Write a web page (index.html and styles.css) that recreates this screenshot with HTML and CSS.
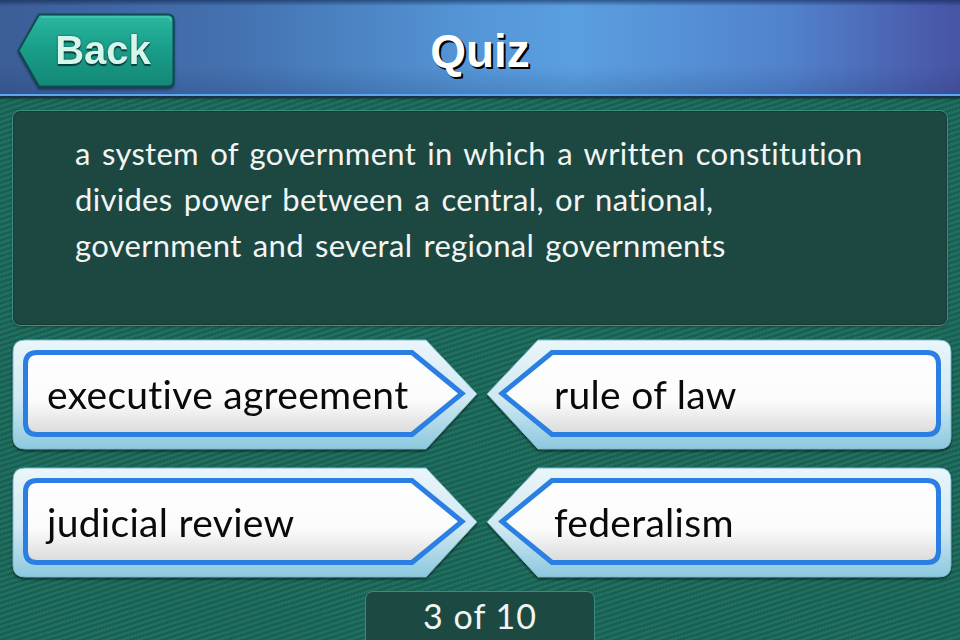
FILE: index.html
```html
<!DOCTYPE html>
<html>

<head>
    <title>Quiz</title>
    <meta name="viewport" content="width=device-width,initial-scale=1">
    <link rel="stylesheet" href="styles.css">
</head>

<body>
    <!-- shared gradients for the button shapes -->
    <svg class="defs" width="0" height="0" aria-hidden="true">
        <defs>
            <linearGradient id="frameFill" x1="0" y1="0" x2="0" y2="1">
                <stop offset="0" stop-color="#eaf6fa" />
                <stop offset="0.55" stop-color="#cfe8f1" />
                <stop offset="1" stop-color="#8cc8de" />
            </linearGradient>
            <linearGradient id="faceFill" x1="0" y1="0" x2="0" y2="1">
                <stop offset="0" stop-color="#ffffff" />
                <stop offset="0.6" stop-color="#fbfbfb" />
                <stop offset="1" stop-color="#d9d9d9" />
            </linearGradient>
            <linearGradient id="backFill" x1="0" y1="0" x2="0" y2="1">
                <stop offset="0" stop-color="#2bb8a0" />
                <stop offset="0.45" stop-color="#1a9f8a" />
                <stop offset="1" stop-color="#138877" />
            </linearGradient>
        </defs>
    </svg>

    <div class="screen">
        <header class="topbar">
            <a class="back-btn" href="#">
                <svg class="back-shape" viewBox="0 0 158 76">
                    <path d="M22,1.5 H151 Q156.5,1.5 156.5,7 V68 Q156.5,73.5 151,73.5 H22 L1.5,37.5 Z"
                        fill="url(#backFill)" stroke="#0c4b52" stroke-width="2" />
                    <path d="M24,4 H150 Q153.5,4 153.5,8" fill="none" stroke="#5fd6c2" stroke-width="1.5"
                        opacity="0.6" />
                </svg>
                <span>Back</span>
            </a>
            <h1 class="title">Quiz</h1>
            <div></div>
        </header>

        <main class="content">
            <section class="prompt">
                <p>a system of government in which a written constitution<br>
                    divides power between a central, or national,<br>
                    government and several regional governments</p>
            </section>

            <div class="answers">
                <button class="answer answer--left">
                    <svg class="answer-shape" viewBox="0 0 466 112">
                        <path class="frame" d="M13,1 H414 L465,55 L414,110 H13 Q1,110 1,98 V13 Q1,1 13,1 Z" />
                        <path class="face" d="M25,13.5 H400 L450,54.5 L400,95.5 H25 Q13.5,95.5 13.5,84 V25 Q13.5,13.5 25,13.5 Z" />
                    </svg>
                    <span>executive agreement</span>
                </button>
                <button class="answer answer--right">
                    <svg class="answer-shape" viewBox="0 0 466 112">
                        <path class="frame" d="M13,1 H414 L465,55 L414,110 H13 Q1,110 1,98 V13 Q1,1 13,1 Z" />
                        <path class="face" d="M25,13.5 H400 L450,54.5 L400,95.5 H25 Q13.5,95.5 13.5,84 V25 Q13.5,13.5 25,13.5 Z" />
                    </svg>
                    <span>rule of law</span>
                </button>
                <button class="answer answer--left">
                    <svg class="answer-shape" viewBox="0 0 466 112">
                        <path class="frame" d="M13,1 H414 L465,55 L414,110 H13 Q1,110 1,98 V13 Q1,1 13,1 Z" />
                        <path class="face" d="M25,13.5 H400 L450,54.5 L400,95.5 H25 Q13.5,95.5 13.5,84 V25 Q13.5,13.5 25,13.5 Z" />
                    </svg>
                    <span>judicial review</span>
                </button>
                <button class="answer answer--right">
                    <svg class="answer-shape" viewBox="0 0 466 112">
                        <path class="frame" d="M13,1 H414 L465,55 L414,110 H13 Q1,110 1,98 V13 Q1,1 13,1 Z" />
                        <path class="face" d="M25,13.5 H400 L450,54.5 L400,95.5 H25 Q13.5,95.5 13.5,84 V25 Q13.5,13.5 25,13.5 Z" />
                    </svg>
                    <span>federalism</span>
                </button>
            </div>

            <div class="counter">3 of 10</div>
        </main>
    </div>
</body>

</html>
```

FILE: styles.css
```css
html,
body {
    margin: 0;
    height: 100%;
}

body {
    font-family: "Lato", "Noto Sans", sans-serif;
    background-color: #1d6a5d;
    overflow: hidden;
}

.defs {
    position: absolute;
    width: 0;
    height: 0;
}

/* Whole screen, teal with fine diagonal stripes */
.screen {
    width: 960px;
    height: 640px;
    display: flex;
    flex-direction: column;
    background-color: #1d6a5d;
    background-image: repeating-linear-gradient(162deg,
            #20705f 0px, #20705f 2.5px,
            #1a5f53 2.5px, #1a5f53 5px);
}

/* Blue title bar */
.topbar {
    flex: none;
    height: 94px;
    display: grid;
    grid-template-columns: 1fr auto 1fr;
    align-items: center;
    background:
        linear-gradient(to bottom, rgba(10, 30, 70, 0.55) 0px, rgba(10, 30, 70, 0) 6px, rgba(255, 255, 255, 0) 70%, rgba(20, 40, 90, 0.18) 100%),
        linear-gradient(to right, #3c5d97 0%, #4472b0 25%, #5597d8 50%, #5a9fe0 60%, #5182cc 82%, #4853a4 100%);
    border-bottom: 2px solid #5ba6ee;
    box-shadow: 0 2px 0 #16304e, 0 3px 2px rgba(0, 0, 0, 0.35);
    position: relative;
    z-index: 1;
}

.back-btn {
    position: relative;
    justify-self: start;
    margin-left: 17px;
    margin-top: 7px;
    width: 158px;
    height: 76px;
    display: flex;
    align-items: center;
    justify-content: center;
    padding-left: 14px;
    box-sizing: border-box;
    text-decoration: none;
    filter: drop-shadow(0 2px 1px rgba(0, 0, 0, 0.45));
}

.back-shape {
    position: absolute;
    inset: 0;
    width: 100%;
    height: 100%;
}

.back-btn span {
    position: relative;
    font-family: "Liberation Sans", Arial, sans-serif;
    font-weight: bold;
    font-size: 40px;
    color: #d6f6ec;
    text-shadow: 0 2px 1px #063c3c, 0 0 2px #0a4a48;
}

.title {
    margin: 8px 0 0;
    font-family: "Liberation Sans", Arial, sans-serif;
    font-weight: bold;
    font-size: 46px;
    color: #ffffff;
    text-shadow: 2px 2px 0 #000000, 1px 1px 1px #000000;
}

.content {
    flex: 1;
    display: flex;
    flex-direction: column;
    padding: 14px 12px 0 12px;
}

/* Dark green question panel */
.prompt {
    flex: none;
    height: 216px;
    box-sizing: border-box;
    background-color: #1c4841;
    border: 1px solid #3f8e7e;
    border-radius: 8px;
    box-shadow: inset 0 0 0 1px #173c36, 0 1px 2px rgba(0, 0, 0, 0.3);
    padding: 19px 0 0 62px;
}

.prompt p {
    margin: 0;
    font-size: 31px;
    line-height: 46px;
    letter-spacing: 0.3px;
    word-spacing: 3px;
    color: #f2f5f3;
}

/* Answer buttons in a 2x2 grid */
.answers {
    flex: none;
    margin-top: 13px;
    display: grid;
    grid-template-columns: 466px 466px;
    grid-template-rows: 112px 112px;
    column-gap: 8px;
    row-gap: 16px;
}

.answer {
    position: relative;
    display: flex;
    align-items: center;
    padding: 0 0 2px 35px;
    margin: 0;
    border: 0;
    background: none;
    font-family: "Lato", "Noto Sans", sans-serif;
    font-size: 39px;
    letter-spacing: 0.3px;
    color: #0a0a0a;
    text-align: left;
    filter: drop-shadow(0 2px 1px rgba(0, 0, 0, 0.5));
}

.answer--right {
    padding-left: 68px;
}

.answer-shape {
    position: absolute;
    inset: 0;
    width: 100%;
    height: 100%;
}

.answer--right .answer-shape {
    transform: scaleX(-1);
}

.answer-shape .frame {
    fill: url(#frameFill);
    stroke: #7bb9cf;
    stroke-width: 1;
}

.answer-shape .face {
    fill: url(#faceFill);
    stroke: #2b7fe2;
    stroke-width: 5;
}

.answer span {
    position: relative;
}

/* Question counter tab */
.counter {
    flex: none;
    align-self: center;
    margin-top: 12px;
    width: 230px;
    height: 60px;
    box-sizing: border-box;
    background-color: #1c4a42;
    border: 1px solid #3c8a79;
    border-radius: 8px 8px 0 0;
    text-align: center;
    font-size: 34px;
    line-height: 48px;
    letter-spacing: 1px;
    color: #f2f5f3;
}
```
